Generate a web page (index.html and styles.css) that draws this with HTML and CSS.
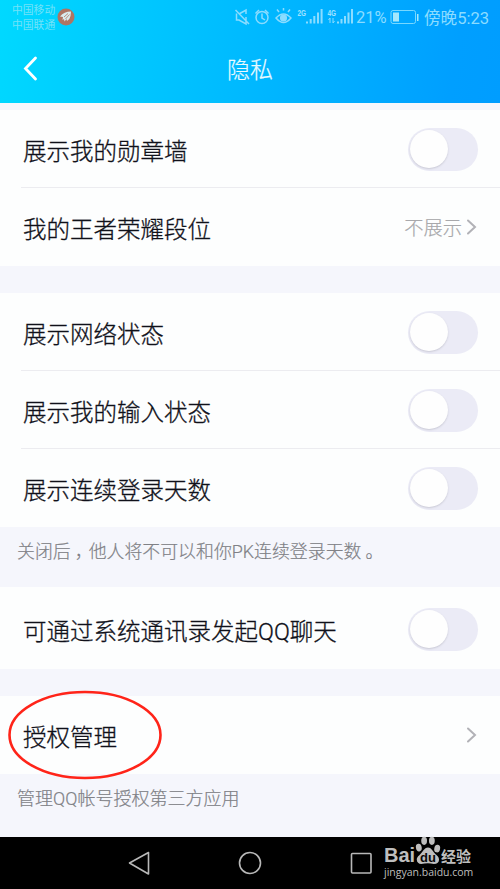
FILE: index.html
```html
<!DOCTYPE html>
<html lang="zh-CN">
<head>
<meta charset="utf-8">
<title>隐私</title>
<link rel="stylesheet" href="styles.css">
</head>
<body>
<div class="screen">
  <header class="header">
    <div class="status">
      <div class="carriers"><span>中国移动</span><span>中国联通</span></div>
      <svg class="notice" width="18" height="18" viewBox="0 0 18 18"><circle cx="9" cy="9" r="8.5" fill="#ae7564"/><path d="M3 8.500Q7 3.500 14 3.500L13.500 8Q13 11 10 13L9.500 11L7.500 13.500L7 11L5.500 12L6 9Z" fill="#d9edf0"/><path d="M7 9L11 5.500M8.500 11L12.500 6.500" stroke="#ae7564" stroke-width=".8"/></svg>
      <svg class="indicators" width="131" height="26" viewBox="0 0 131 26" fill="none" stroke="#8bdcff" stroke-width="1.5">
        <path d="M2.500 13.500V20H5L12 24V17M5 14L12 10V14M1.500 10L15 24"/>
        <circle cx="28" cy="17.5" r="6"/><path d="M28 13.5V18L31 20M21.5 13.5L25 10M31 10L34.5 13.5"/>
        <path d="M42 18Q49.500 10 57 18Q49.500 27 42 18ZM45 12L43 9.500M49.500 10.500V8M54 12L56 9.500"/><circle cx="49.500" cy="18" r="2.800" fill="#8bdcff"/>
        <path stroke-width="2" d="M73 23.500V21.500M76.700 23.500V19M80.300 23.500V16M84 23.500V12.500M87.600 23.500V9M104 23.500V21.500M107.500 23.500V19M111 23.500V16M114.500 23.500V12.500M118 23.500V9"/>
        <path stroke-width="1" d="M96 23V18L94.500 20M99 18V23L100.500 21"/>
        <g class="network"><text transform="translate(63.500 15.500) scale(.72 1)">2G</text><text transform="translate(93.500 15.500) scale(.72 1)">4G</text></g>
      </svg>
      <span class="percent">21%</span>
      <svg class="battery" width="30" height="16" viewBox="0 0 30 16"><rect x="1" y="1.500" width="24.500" height="13" rx="2" fill="none" stroke="#78d8ff"/><path d="M3 3.500H9V12.500H3ZM27 5H28.500V12H27Z" fill="#a5e7fc"/></svg>
      <span class="clock">傍晚5:23</span>
    </div>
    <div class="titlebar">
      <svg class="back" width="16" height="28" viewBox="0 0 16 28"><path d="M12.500 3L2.500 13.500L12.500 24" fill="none" stroke="#fff" stroke-width="2.800" stroke-linecap="round"/></svg>
      <h1>隐私</h1>
    </div>
  </header>
  <main>
    <section class="group">
      <div class="row"><span class="label">展示我的勋章墙</span><i class="toggle"></i></div>
      <div class="row"><span class="label">我的王者荣耀段位</span><span class="value">不展示</span><svg class="arrow" width="12" height="18" viewBox="0 0 12 18"><path d="M2 2.500L9 9L2 15.500"/></svg></div>
    </section>
    <section class="group network-group">
      <div class="row"><span class="label">展示网络状态</span><i class="toggle"></i></div>
      <div class="row"><span class="label">展示我的输入状态</span><i class="toggle"></i></div>
      <div class="row"><span class="label">展示连续登录天数</span><i class="toggle"></i></div>
    </section>
    <p class="note login-note">关闭后<span class="mark">，</span>他人将不可以和你PK连续登录天数<span class="mark stop">。</span></p>
    <section class="group contacts"><div class="row"><span class="label">可通过系统通讯录发起QQ聊天</span><i class="toggle"></i></div></section>
    <section class="group authorization">
      <div class="row"><span class="label">授权管理</span><svg class="arrow" width="12" height="18" viewBox="0 0 12 18"><path d="M2 2.500L9 9L2 15.500"/></svg></div>
      <svg class="highlight" width="154" height="90" viewBox="0 0 154 90"><ellipse cx="77" cy="45" rx="75.500" ry="43"/></svg>
    </section>
    <p class="note">管理QQ帐号授权第三方应用</p>
  </main>
  <footer class="navigation">
    <svg class="keys" width="250" height="30" viewBox="0 0 250 30" fill="none" stroke="#b8b8b8" stroke-width="1.600"><path d="M22.500 4.500V26L3.500 15Z" stroke-linejoin="round"/><circle cx="124" cy="15" r="10.500"/><rect x="225.500" y="5.500" width="19.500" height="19.500" rx="1"/></svg>
    <div class="brand">
      <div class="logo"><span class="bai">Bai</span><span class="paw"><svg width="26" height="29" viewBox="0 0 26 30" fill="#bebebe"><ellipse cx="3.500" cy="12" rx="3" ry="4" transform="rotate(-10 3.500 12)"/><ellipse cx="9" cy="5" rx="3" ry="4.200"/><ellipse cx="17" cy="5" rx="3" ry="4.200"/><ellipse cx="22.500" cy="13" rx="3" ry="4" transform="rotate(12 22.500 13)"/><path d="M13 12C9 12 7.500 17 4 20C-1 24 2 29 6 29Q13 27.500 19 29C25 29 26 23 22 20C18 17 17 12 13 12Z"/></svg><b>du</b></span><span class="experience">经验</span></div>
      <div class="domain">jingyan.baidu.com</div>
    </div>
  </footer>
</div>
</body>
</html>
```
FILE: styles.css
```css
* { box-sizing: border-box; }
body { margin: 0; }
.screen { width: 500px; height: 889px; overflow: hidden; background: #f5f6fc; color: #10111a; font-family: Roboto, "Noto Sans CJK SC", sans-serif; }
.header { height: 103px; background: linear-gradient(100deg, #00d9ff 0%, #00bdff 44%, #009fff 90%, #009dff 100%); }
.status { display: flex; height: 36px; color: #8bdcff; }
.carriers { display: flex; flex-direction: column; margin: 3px 0 0 12px; width: 44px; font-size: 10.8px; line-height: 15px; white-space: nowrap; color: #72e2f8; }
.notice { margin: 8px 0 0 1px; }
.indicators { margin-left: 159px; }
.network text { font: 700 9px "Liberation Sans", sans-serif; fill: #a1e2ff; stroke: none; }
.percent { width: 35px; margin-top: 7px; margin-left: -9px; font-size: 16.5px; line-height: 22px; }
.battery { margin: 9px 0 0 -1px; }
.clock { margin: 7px 0 0 4px; font-size: 16.6px; line-height: 23px; white-space: nowrap; }
.titlebar { display: grid; grid-template-columns: 24px 1fr 24px; height: 66px; align-items: center; }
.back { margin-left: 23px; }
h1 { margin: 0; padding-top: 3px; text-align: center; font-size: 23px; font-weight: 300; color: #e9faff; line-height: 30px; -webkit-text-stroke: .2px; }
main { height: 734px; padding-top: 7px; }
.group { background: #fdfefe; }
.row { display: flex; align-items: center; height: 78px; padding: 0 22px 0 23px; font-size: 23.5px; line-height: 34px; white-space: nowrap; background: linear-gradient(#ececf0, #ececf0) 21px 100% / 479px 1px no-repeat; }
.row:last-child, .authorization .row { background: none; }
.label { padding-top: 6px; font-weight: 300; -webkit-text-stroke: .3px; }
.toggle { width: 70px; height: 43px; margin-left: auto; border-radius: 22px; background: #ebebf6; padding: 2px; }
.toggle::before { content: ""; display: block; width: 38px; height: 38px; border-radius: 50%; background: #fefefe; box-shadow: 0 1px 2px #c9c9d5; }
.value { margin-left: auto; margin-right: 4px; padding-top: 4px; color: #a8a8ab; font-size: 19.3px; font-weight: 300; -webkit-text-stroke: .2px; }
.arrow { fill: none; stroke: #b2b2b7; stroke-width: 2; stroke-linecap: round; }
.label + .arrow { margin-left: auto; }
.network-group { margin-top: 27px; }
.note { margin: 0; height: 63px; padding: 12px 17px; color: #808186; font-size: 18px; font-weight: 300; line-height: 26px; white-space: nowrap; -webkit-text-stroke: .2px; }
.login-note { height: 60px; font-size: 17.9px; }
.mark { padding: 0 5px 0 4px; font-feature-settings: "halt"; }
.stop { padding-left: 4px; }
.contacts { height: 82px; padding-top: 3px; }
.authorization { position: relative; margin-top: 27px; }
.highlight { position: absolute; left: 8px; top: -6px; z-index: 1; fill: none; stroke: #ff2419; stroke-width: 2.600; }
.navigation { position: relative; z-index: 2; display: flex; height: 52px; background: #000; }
.keys { margin: 11px 0 0 126px; flex: none; }
.brand { margin: -2px 0 0 8px; color: #bebebe; width: 94px; }
.logo { display: flex; align-items: flex-end; height: 30px; font: 700 20px/26px "Liberation Sans", "Noto Sans CJK SC", sans-serif; }
.bai { width: 30px; font-size: 20px; line-height: 20px; }
.paw { position: relative; width: 26px; height: 29px; margin-left: 1px; }
.paw b { position: absolute; left: 5px; bottom: 0; color: #080808; font-size: 13px; line-height: 15px; }
.experience { font-size: 15px; line-height: 17px; white-space: nowrap; }
.domain { font: 10.5px/14px "Open Sans", sans-serif; white-space: nowrap; }
```
